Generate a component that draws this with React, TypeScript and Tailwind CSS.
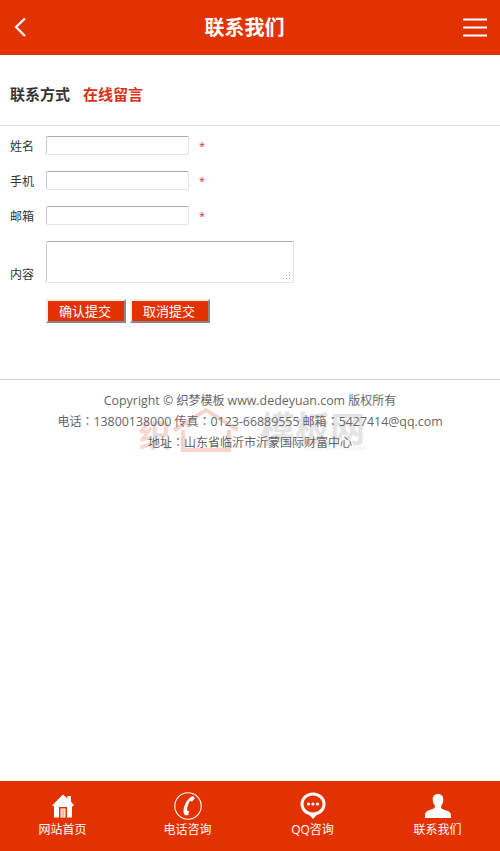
const font = { fontFamily: '"Open Sans","Noto Sans CJK SC",sans-serif' };
const tc = { fontFamily: '"Noto Sans CJK TC",sans-serif' };

function L({ children }: { children: string }) {
  return <span className="text-[12.4px]">{children}</span>;
}
function C() {
  return <span style={tc}>：</span>;
}

function Field({ label }: { label: string }) {
  return (
    <div className="flex h-[19px] items-center">
      <span className="w-[46px] translate-y-[1px] pl-[10px] text-[12px] text-[#333]">{label}</span>
      <input className="h-[19px] w-[143px] rounded-[2px] border border-[#e2e2e2] border-t-[#aaa] border-l-[#ccc] bg-white" />
      <span className="ml-[10px] translate-y-[1px] text-[11px] text-[#e0303a]">*</span>
    </div>
  );
}

function Home() {
  return (
    <svg width="22" height="24" viewBox="0 0 22 24" fill="#fff">
      <path fillRule="evenodd" d="M11 .5 15.500 4.500V2H19V7.500L22 11.500 20 12.500V23.500H2V12.500L0 11.500ZM7 13V23.500H8.500V14.500H13.500V23.500H15V13Z" />
      <rect x="9.500" y="15.500" width="3" height="8" fill="#f5b9a6" />
    </svg>
  );
}

function Phone() {
  return (
    <svg width="30" height="28" viewBox="0 0 30 28" fill="none">
      <circle cx="15" cy="14" r="13.200" stroke="#fff" strokeWidth="1.100" />
      <path d="M19.500 4c1.200.4 2 1.300 2.300 2.400l-2.800 3.300-1.800-1C15.500 11 14 15 14 18.500l2 .6-.6 3.700c-1.400.9-3.200.7-4-.4C8.800 18.500 12 8 19.500 4Z" fill="#fff" />
    </svg>
  );
}

function Chat() {
  return (
    <svg width="26" height="28" viewBox="0 0 26 28" fill="none">
      <path fillRule="evenodd" clipRule="evenodd" d="M13 .5C6 .5.5 5.500.5 12c0 5.800 4 10 9 11.200L13 27l3.500-3.800c5-1.200 9-5.400 9-11.200C25.500 5.500 20 .5 13 .5ZM13 3.500c5.200 0 9.500 3.700 9.500 8.500s-4.300 8.500-9.500 8.500S3.500 16.800 3.500 12 7.800 3.500 13 3.500Z" fill="#fff" />
      <circle cx="8.500" cy="12" r="1.600" fill="#fff" />
      <circle cx="13" cy="12" r="1.600" fill="#fff" />
      <circle cx="17.500" cy="12" r="1.600" fill="#fff" />
    </svg>
  );
}

function User() {
  return (
    <svg width="26" height="24" viewBox="0 0 26 24" fill="#fff">
      <path d="M13 0c3.500 0 5.300 2.300 5.300 5.500 0 3-1 5.200-2.300 6.800 0 1.700.5 2.600 2.500 3.300 3 1.100 7 2 7.500 5.400V24H0V20.500c.5-3.400 4.500-4.300 7.500-5.400 2-.7 2.500-1.600 2.500-3.300C8.700 10.200 7.700 8.500 7.700 5.500 7.700 2.300 9.500 0 13 0Z" />
    </svg>
  );
}

const tabs = [
  { label: "网站首页", icon: <Home /> },
  { label: "电话咨询", icon: <Phone /> },
  { label: "QQ咨询", icon: <Chat /> },
  { label: "联系我们", icon: <User /> },
];

function Watermark() {
  return (
    <div className="pointer-events-none absolute left-[138px] top-[26px] flex h-[46px] w-[230px] items-end">
      <span className="w-[34px] text-[32px] font-bold leading-[34px] text-[#f9d8d0]">织</span>
      <svg width="68" height="46" viewBox="0 0 68 46" fill="none" stroke="#f7d3cb" strokeWidth="4">
        <path d="M2 24 34 4l32 20" />
        <path d="M11 24V44H57V24" />
      </svg>
      <span className="ml-[20px] pb-[4px] text-[35px] font-bold leading-[38px] text-[#e4e4e4]">模板网</span>
      <span className="absolute right-[2px] top-[36px] text-[8px] leading-[10px] text-[#efefef]">DEDEYUAN.COM</span>
    </div>
  );
}

export default function App() {
  return (
    <div className="flex h-[851px] w-[500px] flex-col bg-white text-[#333]" style={font}>
      <header className="flex h-[55px] items-center justify-between bg-[#e33200] pl-[14px] pr-[13px] text-white">
        <svg width="12" height="20" viewBox="0 0 12 20" fill="none" stroke="#fff" strokeWidth="2.200">
          <path d="M11 .5 2 9 11 18" />
        </svg>
        <h1 className="text-[20px] font-bold leading-none">联系我们</h1>
        <div className="flex w-[24px] -translate-y-[0.5px] flex-col gap-[6px]">
          <i className="h-[2px] bg-white" />
          <i className="h-[2px] bg-white" />
          <i className="h-[2px] bg-white" />
        </div>
      </header>

      <nav className="flex h-[71px] items-center gap-[13px] border-b border-[#ddd] pl-[10px] pt-[9px] text-[15px] font-bold">
        <span className="text-[#333]">联系方式</span>
        <span className="text-[#d9301a]">在线留言</span>
      </nav>

      <form className="flex flex-col gap-[16px] pt-[10px]">
        <Field label="姓名" />
        <Field label="手机" />
        <Field label="邮箱" />
        <div className="flex items-end">
          <span className="w-[46px] translate-y-[1px] pl-[10px] text-[12px] text-[#333]">内容</span>
          <div className="relative h-[42px] w-[248px]">
            <textarea className="block h-full w-full resize-none rounded-[2px] border border-[#e2e2e2] border-t-[#aaa] border-l-[#ccc] bg-white" />
            <svg width="9" height="9" viewBox="0 0 9 9" fill="#aaa" className="absolute bottom-[2px] right-[2px]">
              <rect x="6" y="0" width="1" height="1" />
              <rect x="3" y="3" width="1" height="1" />
              <rect x="6" y="3" width="1" height="1" />
              <rect x="0" y="6" width="1" height="1" />
              <rect x="3" y="6" width="1" height="1" />
              <rect x="6" y="6" width="1" height="1" />
            </svg>
          </div>
        </div>
        <div className="flex gap-[4px] pl-[46px]">
          <button type="button" className="h-[24px] w-[80px] border-2 border-[#eee] border-r-[#888] border-b-[#888] bg-[#e33200] pr-[2px] text-[13px] leading-none text-white">确认提交</button>
          <button type="button" className="h-[24px] w-[80px] border-2 border-[#eee] border-r-[#888] border-b-[#888] bg-[#e33200] pr-[2px] text-[13px] leading-none text-white">取消提交</button>
        </div>
      </form>

      <footer className="relative mt-[56px] border-t border-[#ccc] pt-[11px] text-center text-[12px] leading-[20px] text-[#666]">
        <Watermark />
        <p className="relative"><L>Copyright ©</L> 织梦模板 <L>www.dedeyuan.com</L> 版权所有</p>
        <p className="relative">电话<C /><L>13800138000</L> 传真<C /><L>0123-66889555</L> 邮箱<C /><L>5427414@qq.com</L></p>
        <p className="relative">地址<C />山东省临沂市沂蒙国际财富中心</p>
      </footer>

      <div className="flex-1" />

      <div className="grid h-[70px] grid-cols-4 bg-[#e33200] text-white">
        {tabs.map((t) => (
          <div key={t.label} className="flex flex-col items-center pt-[11px]">
            <div className="flex h-[28px] items-center justify-center">{t.icon}</div>
            <span className="mt-[2px] text-[12px] leading-[16px]">{t.label}</span>
          </div>
        ))}
      </div>
    </div>
  );
}
